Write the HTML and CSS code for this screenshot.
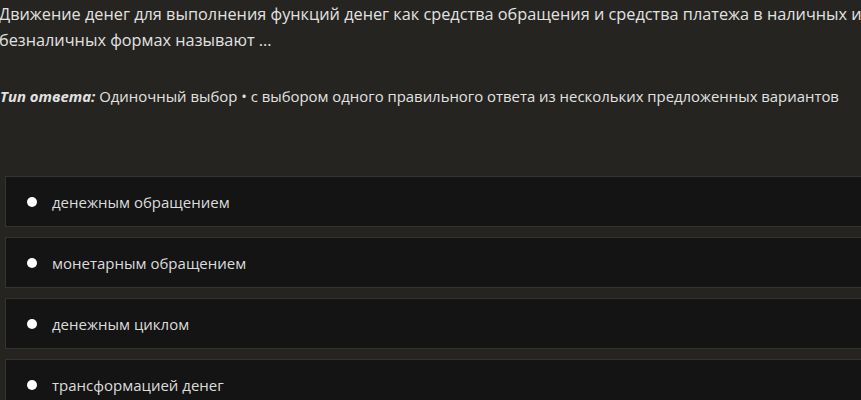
FILE: index.html
```html
<!DOCTYPE html>
<html lang="ru">
<head>
    <meta charset="UTF-8">
    <title>Вопрос</title>
    <link rel="stylesheet" href="styles.css">
</head>
<body>
    <div class="question">
        <p class="question-text">Движение денег для выполнения функций денег как средства обращения и средства платежа в наличных и безналичных формах называют ...</p>
        <p class="answer-type"><span class="answer-label">Тип ответа:</span> Одиночный выбор • с выбором одного правильного ответа из нескольких предложенных вариантов</p>
    </div>

    <ul class="options">
        <li class="option"><span class="dot"></span>денежным обращением</li>
        <li class="option"><span class="dot"></span>монетарным обращением</li>
        <li class="option"><span class="dot"></span>денежным циклом</li>
        <li class="option"><span class="dot"></span>трансформацией денег</li>
    </ul>
</body>
</html>
```

FILE: styles.css
```css
:root {
    --background-color: #252420;
    --card-color: #141414;
    --border-color: #34332e;
    --text-color: #e2e2e2;
}

body {
    background-color: var(--background-color);
    color: var(--text-color);
    font-family: 'Open Sans', 'Segoe UI', sans-serif;
    margin: 0;
    overflow: hidden;
}

.question-text {
    font-size: 16.3px;
    line-height: 26px;
    margin: 1px 0 0 -1px;
    width: 880px;
}

.answer-type {
    font-size: 14.9px;
    margin: 32px 0 0 0;
    line-height: 22px;
}

.answer-label {
    font-weight: bold;
    font-style: italic;
}

.options {
    list-style: none;
    margin: 69px 0 0 5px;
    padding: 0;
    display: flex;
    flex-direction: column;
    gap: 10px;
}

.option {
    background-color: var(--card-color);
    border: 1px solid var(--border-color);
    border-right: none;
    height: 49px;
    display: flex;
    align-items: center;
    font-size: 15px;
    color: #dcdcdc;
}

.dot {
    width: 10px;
    height: 10px;
    border-radius: 50%;
    background-color: #fff;
    margin: 0 15px 0 21px;
}
```
